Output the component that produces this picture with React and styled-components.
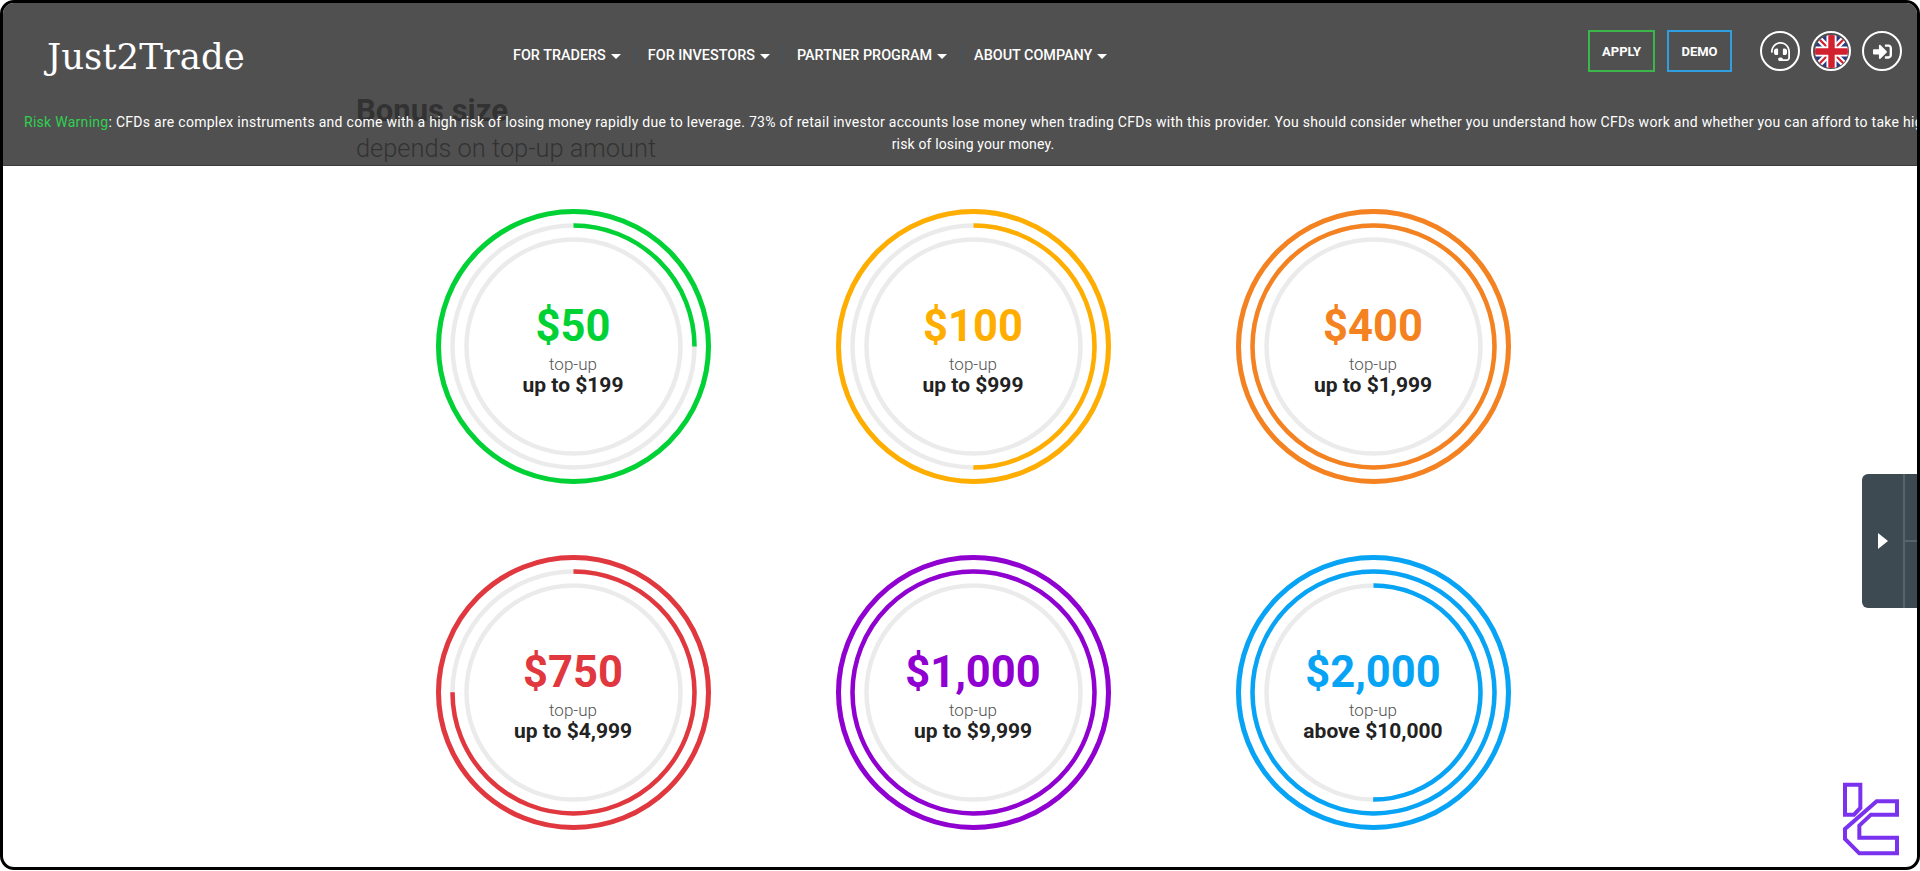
import React from 'react';
import styled, { createGlobalStyle } from 'styled-components';
import { FaHeadset, FaSignInAlt } from 'react-icons/fa';

const GlobalStyle = createGlobalStyle`
  html, body {
    margin: 0;
    padding: 0;
    background: #fff;
    font-family: Roboto, "Liberation Sans", sans-serif;
    overflow: hidden;
  }
`;

const navItems = ['For traders', 'For investors', 'Partner program', 'About company'];

const bonuses = [
  { amount: '$50', limit: 'up to $199', color: '#00d135', middle: 0.25, inner: 0 },
  { amount: '$100', limit: 'up to $999', color: '#ffae00', middle: 0.5, inner: 0 },
  { amount: '$400', limit: 'up to $1,999', color: '#f58220', middle: 1, inner: 0 },
  { amount: '$750', limit: 'up to $4,999', color: '#e0383e', middle: 0.75, inner: 0 },
  { amount: '$1,000', limit: 'up to $9,999', color: '#8f00d1', middle: 1, inner: 0 },
  { amount: '$2,000', limit: 'above $10,000', color: '#07a4f6', middle: 1, inner: 0.5 },
];

function Arc({ r, value, color, width }) {
  const length = 2 * Math.PI * r;
  return (
    <>
      <circle cx="137.5" cy="137.5" r={r} fill="none" stroke="#ebebeb" strokeWidth={width} />
      {value > 0 && (
        <circle
          cx="137.5"
          cy="137.5"
          r={r}
          fill="none"
          stroke={color}
          strokeWidth={width}
          strokeDasharray={`${length * value} ${length}`}
          transform="rotate(-90 137.5 137.5)"
        />
      )}
    </>
  );
}

function BonusRing({ amount, limit, color, middle, inner }) {
  return (
    <Ring>
      <RingArt viewBox="0 0 275 275">
        <Arc r={135} value={1} color={color} width={5} />
        <Arc r={121} value={middle} color={color} width={4.5} />
        <Arc r={107} value={inner} color={color} width={4.5} />
      </RingArt>
      <Amount $color={color}>{amount}</Amount>
      <TopUp>top-up</TopUp>
      <Limit>{limit}</Limit>
    </Ring>
  );
}

function UkFlag() {
  return (
    <svg width="33" height="33" viewBox="0 0 36 36">
      <defs>
        <clipPath id="flagClip">
          <circle cx="18" cy="18" r="18" />
        </clipPath>
      </defs>
      <g clipPath="url(#flagClip)">
        <rect width="36" height="36" fill="#2b3a82" />
        <path d="M0 0L36 36M36 0L0 36" stroke="#fff" strokeWidth="7" />
        <path d="M0 0L36 36M36 0L0 36" stroke="#d3202f" strokeWidth="2.4" />
        <path d="M18 0V36M0 18H36" stroke="#fff" strokeWidth="11" />
        <path d="M18 0V36M0 18H36" stroke="#d3202f" strokeWidth="7" />
      </g>
    </svg>
  );
}

function Logo() {
  return (
    <Watermark viewBox="0 0 255 288">
      <path d="M30 32H76V102L57 122H30Z" />
      <path d="M125 82H186V122H108L73 155V191H186V238H73L30 195V165Z" />
    </Watermark>
  );
}

export default function App() {
  return (
    <Frame>
      <GlobalStyle />
      <Page>
        <Section>
          <Heading>
            <h2>Bonus size</h2>
            <p>depends on top-up amount</p>
          </Heading>
          <RingGrid>
            {bonuses.map((b) => (
              <Cell key={b.amount}>
                <BonusRing {...b} />
              </Cell>
            ))}
          </RingGrid>
        </Section>
      </Page>

      <Header>
        <TopRow>
          <Brand>Just2Trade</Brand>
          <Nav>
            {navItems.map((item) => (
              <NavItem key={item}>
                {item}
                <Caret />
              </NavItem>
            ))}
          </Nav>
          <Actions>
            <OutlineButton $color="#3cb54a" $width={67}>Apply</OutlineButton>
            <OutlineButton $color="#2f9fe0" $width={65}>Demo</OutlineButton>
            <RoundIcons>
              <RoundIcon><FaHeadset size={19} /></RoundIcon>
              <RoundIcon><UkFlag /></RoundIcon>
              <RoundIcon><FaSignInAlt size={19} /></RoundIcon>
            </RoundIcons>
          </Actions>
        </TopRow>
        <Warning>
          <WarningLine $spacing={0.28}>
            <span>Risk Warning</span>: CFDs are complex instruments and come with a high risk of
            losing money rapidly due to leverage. 73% of retail investor accounts lose money when
            trading CFDs with this provider. You should consider whether you understand how CFDs
            work and whether you can afford to take high
          </WarningLine>
          <WarningLine $spacing={0.15}>risk of losing your money.</WarningLine>
        </Warning>
      </Header>

      <SidePanel>
        <PanelToggle>
          <Triangle />
        </PanelToggle>
        <PanelTabs>
          <div />
          <div />
        </PanelTabs>
      </SidePanel>

      <Logo />
    </Frame>
  );
}

const Frame = styled.div`
  position: relative;
  box-sizing: border-box;
  width: 1920px;
  height: 870px;
  border: 3px solid #000;
  border-radius: 14px;
  overflow: hidden;
  background: #fff;
`;

const Page = styled.main`
  width: 1940px;
`;

const Section = styled.section`
  width: 1234px;
  margin: 0 auto;
  padding-top: 89px;
`;

const Heading = styled.div`
  height: 81px;
  color: #222;
  h2 {
    margin: 0;
    font-size: 31px;
    line-height: 38px;
    font-weight: 700;
  }
  p {
    margin: 0;
    font-size: 25.4px;
    line-height: 36px;
    font-weight: 300;
  }
`;

const RingGrid = styled.div`
  width: 1200px;
  margin: 0 auto;
  display: grid;
  grid-template-columns: repeat(3, 400px);
  grid-auto-rows: 346px;
`;

const Cell = styled.div`
  display: flex;
  align-items: center;
  justify-content: center;
`;

const Ring = styled.div`
  position: relative;
  box-sizing: border-box;
  width: 275px;
  height: 275px;
  padding-top: 5px;
  display: flex;
  flex-direction: column;
  align-items: center;
  justify-content: center;
`;

const RingArt = styled.svg`
  position: absolute;
  top: 0;
  left: 0;
  width: 275px;
  height: 275px;
`;

const Amount = styled.div`
  position: relative;
  color: ${(p) => p.$color};
  font-size: 43.5px;
  font-weight: 700;
  line-height: 50px;
  margin-bottom: 3px;
`;

const TopUp = styled.div`
  position: relative;
  color: #555;
  font-size: 17px;
  font-weight: 300;
  line-height: 18px;
  margin-bottom: 1px;
`;

const Limit = styled.div`
  position: relative;
  color: #222;
  font-size: 21px;
  font-weight: 700;
  line-height: 22px;
`;

const Header = styled.header`
  position: absolute;
  top: 0;
  left: 0;
  box-sizing: border-box;
  width: 1940px;
  height: 163px;
  background: rgba(53, 53, 53, 0.865);
  border-bottom: 1px solid #3c3c3c;
  color: #fff;
`;

const TopRow = styled.div`
  height: 104px;
  box-sizing: border-box;
  padding: 0 41px 0 44px;
  display: flex;
  align-items: center;
`;

const Brand = styled.div`
  width: 466px;
  padding-top: 2px;
  font-family: "DejaVu Serif", serif;
  font-size: 35.5px;
  font-weight: 400;
`;

const Nav = styled.nav`
  display: flex;
  align-items: center;
`;

const NavItem = styled.div`
  display: flex;
  align-items: center;
  gap: 5px;
  padding: 0 13px;
  height: 20px;
  font-size: 14.4px;
  font-weight: 500;
  text-transform: uppercase;
  border-left: 1px solid #3f5465;
  &:first-child {
    padding-left: 0;
    border-left: 0;
  }
`;

const Caret = styled.i`
  width: 0;
  height: 0;
  margin-top: 2px;
  border-left: 5px solid transparent;
  border-right: 5px solid transparent;
  border-top: 5px solid #fff;
`;

const Actions = styled.div`
  margin-left: auto;
  display: flex;
  align-items: center;
  gap: 12px;
  margin-bottom: 8px;
`;

const OutlineButton = styled.div`
  box-sizing: border-box;
  width: ${(p) => p.$width}px;
  height: 42px;
  border: 2px solid ${(p) => p.$color};
  display: flex;
  align-items: center;
  justify-content: center;
  font-size: 13px;
  font-weight: 700;
  text-transform: uppercase;
`;

const RoundIcons = styled.div`
  display: flex;
  gap: 11px;
  margin-left: 16px;
`;

const RoundIcon = styled.div`
  box-sizing: border-box;
  width: 40px;
  height: 40px;
  border: 2px solid #fff;
  border-radius: 50%;
  display: flex;
  align-items: center;
  justify-content: center;
  color: #fff;
`;

const Warning = styled.div`
  width: 1898px;
  margin-left: 21px;
  margin-top: 4px;
  font-size: 14px;
  line-height: 22px;
  text-align: center;
  white-space: nowrap;
  span {
    color: #2fd14f;
  }
`;

const WarningLine = styled.div`
  letter-spacing: ${(p) => p.$spacing}px;
`;

const SidePanel = styled.aside`
  position: absolute;
  top: 471px;
  right: 0;
  width: 55px;
  height: 134px;
  display: flex;
  background: #3d4a52;
  border-radius: 6px 0 0 6px;
`;

const PanelToggle = styled.div`
  width: 41px;
  display: flex;
  align-items: center;
  justify-content: center;
  border-right: 2px solid #56636b;
`;

const Triangle = styled.i`
  width: 0;
  height: 0;
  border-top: 8px solid transparent;
  border-bottom: 8px solid transparent;
  border-left: 10px solid #fff;
`;

const PanelTabs = styled.div`
  flex: 1;
  display: flex;
  flex-direction: column;
  div {
    flex: 1;
  }
  div + div {
    border-top: 2px solid #56636b;
  }
`;

const Watermark = styled.svg`
  position: absolute;
  right: -3px;
  bottom: -3px;
  width: 85px;
  height: 96px;
  fill: none;
  stroke: #7b32ee;
  stroke-width: 12;
`;
